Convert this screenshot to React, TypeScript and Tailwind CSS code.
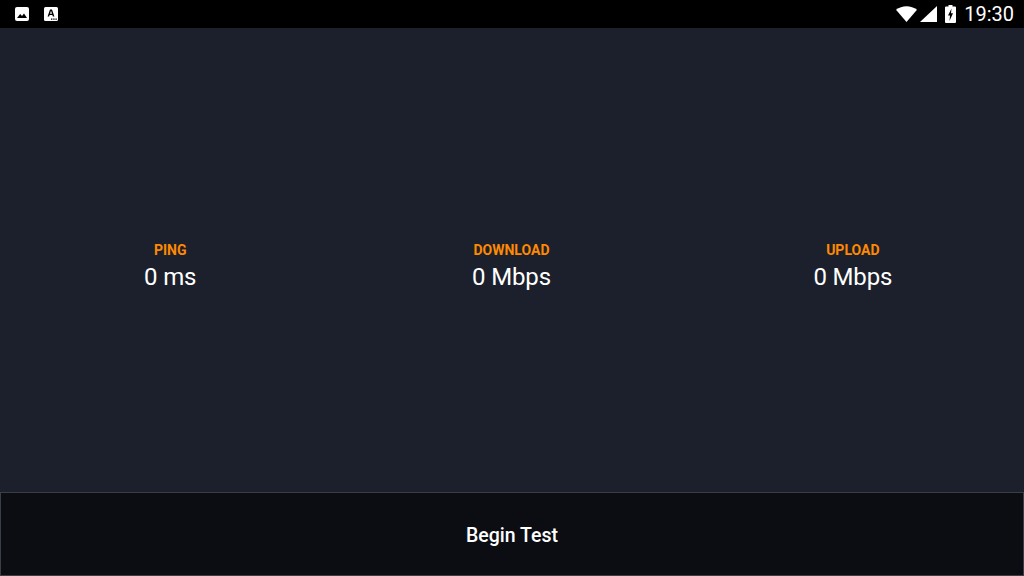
const font = { fontFamily: "Roboto, sans-serif" };

function Stat({ label, value }: { label: string; value: string }) {
  return (
    <div className="flex flex-col items-center">
      <div className="text-[14px] leading-[18px] font-bold text-[#ff8a00] -translate-x-[0.5px]">{label}</div>
      <div className="text-[24px] leading-[36px] tracking-[-0.15px] text-white -translate-x-[0.5px]">{value}</div>
    </div>
  );
}

function StatusBar() {
  return (
    <div className="h-7 bg-black flex items-center justify-between shrink-0">
      <div className="flex items-center pl-[14px] gap-[14px]">
        {/* image notification */}
        <svg width="16" height="16" viewBox="0 0 16 16">
          <rect x="1" y="1" width="14" height="14" rx="2" fill="#fff" />
          <path d="M3 12 L6.2 8 L8 10 L10 7.5 L13 12 Z" fill="#000" />
        </svg>
        {/* font notification */}
        <svg width="14" height="16" viewBox="0 0 14 16">
          <rect x="0" y="1" width="14" height="14" rx="1.5" fill="#fff" />
          <path d="M6 3.5h2l2.4 7H8.9l-.5-1.5H5.6l-.5 1.5H3.6zM6 7.8h2L7 4.8z" fill="#000" fillRule="evenodd" />
          <path d="M7 12.5h1.4v1.2H7zM9.2 12.5h1.4v1.2H9.2zM11.4 12.5h1.4v1.2h-1.4z" fill="#000" />
        </svg>
      </div>
      <div className="flex items-center pr-[10px]">
        {/* wifi */}
        <svg width="21" height="16" viewBox="0 0 21 16">
          <path d="M0 3.800 C5.900 -1.100 15.100 -1.100 21 3.800 L10.500 16 Z" fill="#fff" />
        </svg>
        {/* signal */}
        <svg width="17" height="16" viewBox="0 0 17 16" className="ml-[3px]">
          <path d="M0 16 L17 0 V16 Z" fill="#fff" />
        </svg>
        {/* battery charging */}
        <svg width="11" height="18" viewBox="0 0 11 18" className="ml-[8px]">
          <path d="M3.500 0h4v1.500H10a1 1 0 0 1 1 1V17a1 1 0 0 1-1 1H1a1 1 0 0 1-1-1V2.500a1 1 0 0 1 1-1h2.500z" fill="#fff" />
          <path d="M6.500 3.500 L3 10.500 H5 L4.500 16 L8 8.300 H6 Z" fill="#000" />
        </svg>
        <span className="ml-[8px] text-[20px] leading-7 text-white">19:30</span>
      </div>
    </div>
  );
}

export default function App() {
  return (
    <div className="w-[1024px] h-[576px] flex flex-col bg-[#1c202c] overflow-hidden" style={font}>
      <StatusBar />
      <div className="flex-1 grid grid-cols-3 items-center pt-4">
        <Stat label="PING" value="0 ms" />
        <Stat label="DOWNLOAD" value="0 Mbps" />
        <Stat label="UPLOAD" value="0 Mbps" />
      </div>
      <button className="h-[84px] shrink-0 pt-[3px] bg-[#0b0d12] border border-[#3b3e46] text-white text-[19.5px] font-medium">
        Begin Test
      </button>
    </div>
  );
}
